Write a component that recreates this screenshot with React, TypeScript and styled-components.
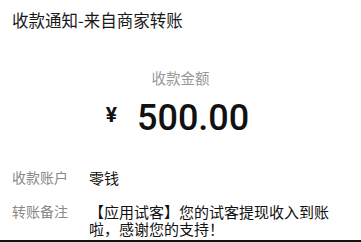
import React from "react";
import styled, { createGlobalStyle } from "styled-components";

const GlobalStyle = createGlobalStyle`
  html, body {
    margin: 0;
    padding: 0;
    background: #ffffff;
  }
  body {
    font-family: "Noto Sans CJK SC", "Noto Sans", sans-serif;
  }
`;

const Card = styled.div`
  display: flex;
  flex-direction: column;
  height: 240px;
  padding: 0 12px;
  border-bottom: 2px solid #111;
  background: #fff;
`;

const Title = styled.div`
  padding-top: 8px;
  font-size: 16.5px;
  line-height: 24px;
  color: #1a1a1a;
`;

const Caption = styled.div`
  margin-top: 36px;
  text-align: center;
  font-size: 14.5px;
  line-height: 20px;
  color: #999;
`;

const Amount = styled.div`
  margin-top: 8px;
  padding-right: 6px;
  display: flex;
  justify-content: center;
  align-items: center;
  gap: 20px;
  height: 44px;
`;

const Currency = styled.span`
  font-family: Roboto, "Liberation Sans", sans-serif;
  font-weight: 700;
  font-size: 21px;
  line-height: 22px;
  margin-top: -7px;
  color: #111;
`;

const Figure = styled.span`
  font-family: Roboto, "Liberation Sans", sans-serif;
  font-weight: 500;
  font-size: 36px;
  line-height: 44px;
  color: #111;
`;

const Details = styled.div`
  margin-top: 29px;
  display: flex;
  flex-direction: column;
  gap: 17px;
`;

const Row = styled.div`
  display: flex;
  align-items: flex-start;
`;

const Label = styled.div`
  width: 77px;
  flex-shrink: 0;
  font-size: 14px;
  line-height: 17px;
  color: #888;
`;

const Value = styled.div`
  width: 244px;
  font-size: 15px;
  line-height: 17px;
  color: #111;
`;

export default function App() {
  return (
    <>
      <GlobalStyle />
      <Card>
        <Title>收款通知-来自商家转账</Title>
        <Caption>收款金额</Caption>
        <Amount>
          <Currency>¥</Currency>
          <Figure>500.00</Figure>
        </Amount>
        <Details>
          <Row>
            <Label>收款账户</Label>
            <Value>零钱</Value>
          </Row>
          <Row>
            <Label>转账备注</Label>
            <Value>【应用试客】您的试客提现收入到账啦，感谢您的支持！</Value>
          </Row>
        </Details>
      </Card>
    </>
  );
}
